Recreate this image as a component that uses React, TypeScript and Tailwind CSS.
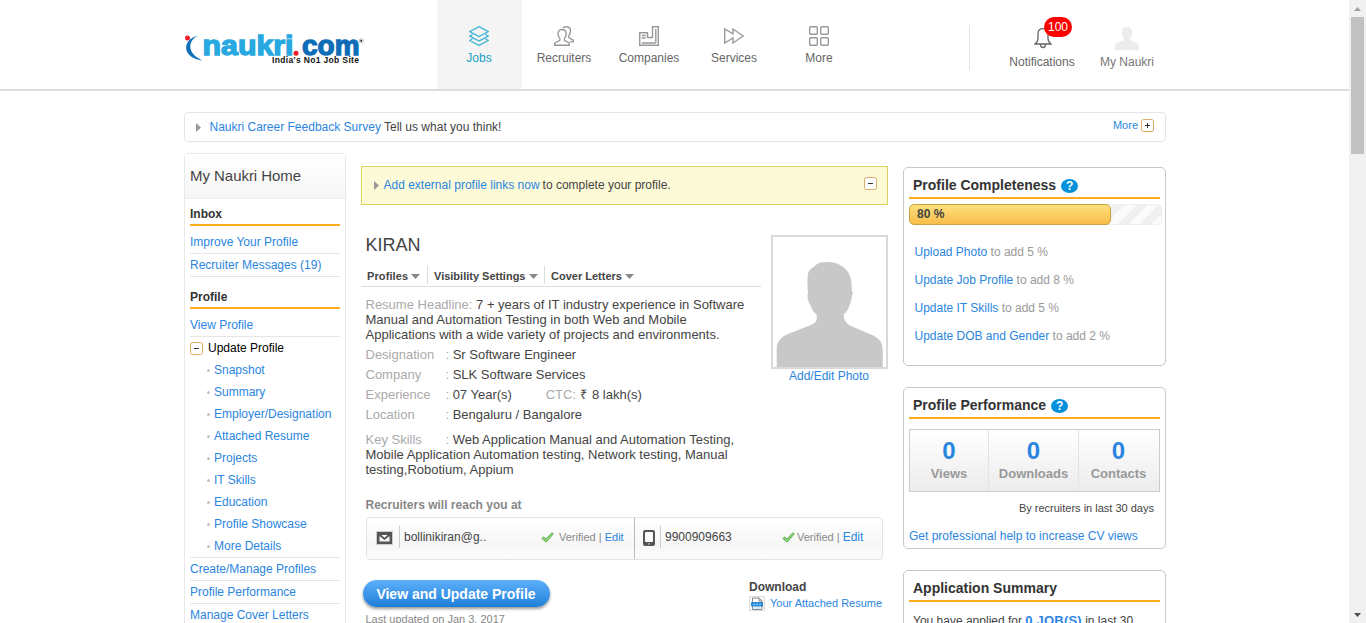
import React from "react";

const Logo = () => (
  <svg width="182" height="34" viewBox="0 0 182 34" className="block">
    <circle cx="3.500" cy="6" r="2.500" fill="#ee1c25" />
    <path d="M14.500 3.500C8.500 6 5.500 11 6.500 16.500C7.500 21.500 12 25.500 18.500 28.500C10 27.500 4.500 24 2.500 18.500C.8 12 5 5.500 14.500 3.500Z" fill="#1170b8" />
    <text x="18.500" y="23" fontFamily="Liberation Sans, sans-serif" fontWeight="700" fontSize="27" fill="#27a8e0" stroke="#27a8e0" strokeWidth="1.300" textLength="91" lengthAdjust="spacingAndGlyphs">naukri</text>
    <circle cx="112" cy="21.300" r="2.500" fill="#ee1c25" />
    <text x="118" y="23" fontFamily="Liberation Sans, sans-serif" fontWeight="700" fontSize="27" fill="#0f6db7" stroke="#0f6db7" strokeWidth="1.300" textLength="57.500" lengthAdjust="spacingAndGlyphs">com</text>
    <text x="88" y="31" fontFamily="Liberation Sans, sans-serif" fontWeight="700" fontSize="8.500" fill="#111" textLength="87" lengthAdjust="spacing">India's No1 Job Site</text>
    <circle cx="177.200" cy="8.800" r="2" fill="none" stroke="#999" strokeWidth=".7" />
    <circle cx="177.200" cy="8.800" r="1" fill="#222" />
  </svg>
);

const navIcons: Record<string, React.ReactNode> = {
  Jobs: <g stroke="#3fb3d3" strokeWidth="1.300"><path d="M10 .7 19.300 5.600 10 10.500 .7 5.600Z" /><path d="M3.500 8.500.7 10.200 10 15l9.300-4.800-2.800-1.700M3.500 12.800.7 14.500 10 19.400l9.300-4.900-2.800-1.700" /></g>,
  Recruiters: <g stroke="#999" strokeWidth="1.400"><path d="M.7 19.300v-2c1-1.700 4.500-1.800 5.300-3.300.5-1.500-2-3-2-6 0-3 1.500-4.500 4-4.500s4.200 1.500 4.200 4.500-2.400 4.500-1.900 6c.8 1.500 4.200 1.600 5 3.300v2Z" /><path d="M8.800 1.800C9.700 1 11 .7 12.300.7c2.700 0 4.200 1.500 4.200 4.300 0 3.200-2.500 4.500-1.900 6.200.7 1.500 4 1.700 4.700 3.200v1.500h-3.600" /></g>,
  Companies: <g stroke="#999" strokeWidth="1.400"><path d="M.7 6.700h7.800v4.800h5V.7h5.800v18.600H.7Z" /><path d="M2.700 9.500h4M2.700 12h4M2.700 17h14M16.800 3v14" /></g>,
  Services: <path d="M.7 3v14l8.300-5v5l10.300-7L9 3v4.800Z" stroke="#999" strokeWidth="1.400" />,
  More: <g stroke="#999" strokeWidth="1.400"><rect x=".7" y=".7" width="7.600" height="7.600" rx="1" /><rect x="11.700" y=".7" width="7.600" height="7.600" rx="1" /><rect x=".7" y="11.700" width="7.600" height="7.600" rx="1" /><rect x="11.700" y="11.700" width="7.600" height="7.600" rx="1" /></g>,
};

const Header = () => (
  <header className="flex h-[91px] border-b-2 border-[#ddd] pl-[184px]">
    <div className="w-[253px] pt-[32px]"><Logo /></div>
    <nav className="flex w-[532px]">
      {Object.keys(navIcons).map((n) => (
        <a key={n} className={`flex w-[85px] flex-col items-center pr-px pt-[26px] text-[12px] leading-[16px] ${n === "Jobs" ? "bg-[#f4f4f4] text-[#1a9fc5]" : "text-[#666]"}`}>
          <svg width="20" height="20" viewBox="0 0 20 20" fill="none" className="mb-[4px]">{navIcons[n]}</svg>
          {n}
        </a>
      ))}
    </nav>
    <div className="mt-[25px] h-[45px] w-px bg-[#e3e3e3]" />
    <a className="relative ml-[34px] flex w-[76px] flex-col items-center pt-[28px] text-[12px] leading-[16px] text-[#666]">
      <svg width="18" height="21" viewBox="0 0 18 21" fill="none" stroke="#666" strokeWidth="1.300" className="mb-[5px] ml-[2px]"><path d="M9 .7C5.500.7 4 3 4 6v4.500c0 2.500-1 4-3 5.500h16c-2-1.500-3-3-3-5.500V6c0-3-1.500-5.300-5-5.300ZM6.500 16.500c0 4 5 4 5 0" /></svg>
      Notifications
      <span className="absolute left-[40px] top-[17px] flex h-[20px] w-[28px] items-center justify-center rounded-full bg-[#f00] text-[12px] text-white">100</span>
    </a>
    <a className="ml-[8px] flex w-[78px] flex-col items-center pt-[27px] text-[12px] leading-[16px] text-[#777]">
      <svg width="24" height="23" viewBox="0 0 24 23" fill="#ececec" className="mb-[4px]"><path d="M12 0C8.500 0 6.500 2 6.800 6c0 3.500 1.800 4.500 2.200 6.500 0 2-8 2.300-9 6V23h24v-4.500c-1-3.700-9-4-9-6 .4-2 2.200-3 2.200-6.500C17.500 2 15.500 0 12 0Z" /></svg>
      My Naukri
    </a>
  </header>
);

const Toggle = ({ plus = false }: { plus?: boolean }) => (
  <svg width="13" height="13" viewBox="0 0 13 13" className="shrink-0"><rect x=".5" y=".5" width="12" height="12" rx="2" fill="#fff" stroke="#dcab68" /><path d={plus ? "M4 6.500h5M6.500 4v5" : "M4 6.500h5"} stroke="#333" /></svg>
);
const Caret = () => <svg width="5" height="9" viewBox="0 0 5 9" className="shrink-0"><path d="M0 0 5 4.500 0 9Z" fill="#999" /></svg>;
const Down = () => <svg width="9" height="5" viewBox="0 0 9 5" className="mb-[2px] ml-[3px] inline-block"><path d="M0 0h9L4.500 5Z" fill="#888" /></svg>;

const SideTitle = ({ children }: { children: React.ReactNode }) => (
  <h3 className="border-b-2 border-[#ffab1f] pb-[2px] text-[12px] font-bold leading-[16px] text-[#333]">{children}</h3>
);
const SideLink = ({ children }: { children: React.ReactNode }) => (
  <a className="block h-[23px] whitespace-nowrap border-b border-[#e6e6e6] text-[12px] leading-[22px]">{children}</a>
);

const Sidebar = () => (
  <aside className="h-[600px] w-[162px] rounded-t-[4px] border border-[#e9e9e9] text-[#2a85e0]">
    <div className="h-[45px] border-b border-[#e9e9e9] bg-linear-to-b from-white to-[#f5f5f5] pl-[5px] text-[15px] leading-[44px] text-[#444]"><span className="tracking-[-0.04px]">My Naukri Home</span></div>
    <div className="pl-[5px] pr-[5px] pt-[7px]">
      <div className="h-[25px]"><SideTitle>Inbox</SideTitle></div>
      <SideLink>Improve Your Profile</SideLink><SideLink>Recruiter Messages (19)</SideLink>
      <div className="h-[37px] pt-[12px]"><SideTitle>Profile</SideTitle></div>
      <SideLink>View Profile</SideLink>
      <div className="flex h-[22px] items-center gap-[5px] text-[12px] text-black"><Toggle />Update Profile</div>
      <ul>
        {["Snapshot", "Summary", "Employer/Designation", "Attached Resume", "Projects", "IT Skills", "Education", "Profile Showcase", "More Details"].map((s) => (
          <li key={s} className="flex h-[22px] items-center whitespace-nowrap pl-[17px] text-[12px]"><i className="mr-[4px] size-[3px] rounded-full bg-[#c4c4c4]" />{s}</li>
        ))}
      </ul>
      <div className="border-t border-[#e6e6e6]">
        <SideLink>Create/Manage Profiles</SideLink><SideLink>Profile Performance</SideLink><SideLink>Manage Cover Letters</SideLink>
      </div>
    </div>
  </aside>
);

const Row = ({ label, children }: { label: string; children: React.ReactNode }) => (
  <div className="flex h-[20px] items-center"><span className="w-[80px] text-[#aaa]">{label}</span><span className="mr-[3.500px] text-[#aaa]">:</span>{children}</div>
);
const Tick = () => (
  <svg width="13" height="11" viewBox="0 0 13 11" className="shrink-0"><path d="M.8 6.500 2.800 4.800 5 7 10.800.8 12.400 1.800 5.200 10.200Z" fill="#8cce74" stroke="#55a84c" strokeWidth=".8" /></svg>
);

const Main = () => (
  <main className="ml-[15px] w-[527px] pt-[13px] text-[13px] leading-[15px] text-[#444]">
    <div className="flex h-[39px] items-start border border-[#dcd35f] bg-[#fdfad8] pl-[12px] pr-[10px]">
      <div className="flex h-[36px] items-center text-[12px]"><Caret /><span className="ml-[4.500px] text-[#2a85e0]">Add external profile links now</span><span className="ml-[3px]"> to complete your profile.</span></div>
      <div className="ml-auto pt-[10px]"><Toggle /></div>
    </div>
    <div className="flex">
      <div className="w-[400px]">
        <h1 className="pl-[4.500px] pt-[30px] text-[18px] leading-[20px]">KIRAN</h1>
        <div className="mt-[11px] flex h-[21px] border-b border-[#ddd] text-[11px] font-bold leading-[20px]">
          <span className="h-[18px] w-[67px] whitespace-nowrap border-r border-[#ddd] pl-[6px] tracking-[0.1px]">Profiles<Down /></span>
          <span className="h-[18px] w-[117px] whitespace-nowrap border-r border-[#ddd] pl-[6px]">Visibility Settings<Down /></span>
          <span className="whitespace-nowrap pl-[6px]">Cover Letters<Down /></span>
        </div>
        <div className="whitespace-nowrap pl-[4.500px] pt-[10px]">
          <p><span className="text-[#aaa]">Resume Headline:</span> 7 + years of IT industry experience in Software<br />Manual and Automation Testing in both Web and Mobile<br />Applications with a wide variety of projects and environments.</p>
          <div className="pt-[2px]">
            <Row label="Designation">Sr Software Engineer</Row>
            <Row label="Company">SLK Software Services</Row>
            <Row label="Experience"><span className="w-[93px]">07 Year(s)</span><span className="mr-[4px] text-[#aaa]">CTC:</span>₹ <span className="ml-[5px]">8 lakh(s)</span></Row>
            <Row label="Location">Bengaluru / Bangalore</Row>
          </div>
          <p className="pt-[8px]"><span className="inline-block w-[80px] text-[#aaa]">Key Skills</span><span className="mr-[3.500px] text-[#aaa]">:</span>Web Application Manual and Automation Testing,<br />Mobile Application Automation testing, Network testing, Manual<br />testing,Robotium, Appium</p>
        </div>
      </div>
      <div className="ml-[10px] mt-[30px] flex w-[117px] flex-col items-center text-[12px] text-[#2a85e0]">
        <div className="h-[134px] w-[117px] border-2 border-[#d9d9d9]">
          <svg width="113" height="130" viewBox="0 0 113 130" fill="#c8c8c8"><path d="M3.700 130v-18c0-7 3.500-11 10-14.500L38 88c4-2 5.500-3.500 5.700-6V77.500c-3-2.500-4.500-4.500-6-9-3-4-4-8.500-2.700-13-.5-7-1.200-14 .3-20C37 32 39 30.500 41 30c2-3 6-5 10.500-4.800 7-.5 12 .5 16.500 3.500 8 4 11.500 13 10.700 24.500 1.500 2 1.500 4 .3 5-.3 4-1 7-2.500 9.800-1.500 5-3 7-5.500 9v4.500c1.500 3 3 6 7 7.500l22.300 9.500c6 3 9.400 7 9.400 14v17.500Z" /></svg>
        </div>
        <a className="mr-px">Add/Edit Photo</a>
      </div>
    </div>
    <h4 className="pl-[4.500px] pt-[21px] text-[12px] font-bold text-[#888]">Recruiters will reach you at</h4>
    <div className="ml-[5px] mt-[4px] flex h-[43px] w-[517px] rounded-[4px] border border-[#e3e3e3] bg-linear-to-b from-white via-[#f6f6f6] via-65% to-[#fcfcfc] text-[12px] text-[#888]">
      <div className="flex w-[268px] items-center border-r border-[#bbb] pb-[3px] pl-[9px]">
        <svg width="17" height="14" viewBox="0 0 17 14" className="mt-px"><rect x=".5" y=".5" width="16" height="13" fill="#555" stroke="#ccc" /><path d="M3.500 5v5.500h10V5L8.500 9Z" fill="#f5f5f5" /><path d="M5.500 4h6l-3 2.800Z" fill="#fff" /></svg>
        <span className="ml-[6px] h-[22px] w-px bg-[#ccc]" /><span className="ml-[4px] w-[137px] text-[#444]">bollinikiran@g..</span>
        <Tick /><span className="ml-[5px] text-[11px]">Verified | <a className="text-[#2a85e0]">Edit</a></span>
      </div>
      <div className="flex items-center pb-[3px] pl-[8px]">
        <svg width="12" height="16" viewBox="0 0 12 16" className="mt-[2px]"><rect width="12" height="16" rx="2" fill="#555" /><rect x="2" y="2" width="8" height="10" rx="1" fill="#fafafa" /><rect x="5" y="13.300" width="2" height="1.200" fill="#bbb" /></svg>
        <span className="ml-[5px] h-[22px] w-px bg-[#ccc]" /><span className="ml-[4px] w-[117px] text-[#444]">9900909663</span>
        <Tick /><span className="ml-[2px] whitespace-nowrap text-[11px]">Verified | <a className="text-[12px] text-[#2a85e0]">Edit</a></span>
      </div>
    </div>
    <div className="flex pl-[2px] pt-[20px]">
      <div className="w-[386px]">
        <button className="block h-[27px] w-[187px] rounded-full bg-linear-to-b from-[#5cb0fb] to-[#1c7fd8] pr-px text-[14px] font-bold leading-[26px] text-white shadow-[0_2px_3px_#999]">View and Update Profile</button>
        <p className="pl-[2.500px] pt-[6px] text-[11px] leading-[13px] text-[#888]">Last updated on Jan 3, 2017</p>
      </div>
      <div>
        <h4 className="text-[12px] font-bold leading-[14px]">Download</h4>
        <div className="flex items-center pt-[2px] text-[11px] text-[#2a85e0]">
          <svg width="16" height="15" viewBox="0 0 16 15"><rect x=".5" y=".5" width="15" height="14" fill="#f7f7f7" stroke="#ddd" /><path d="M3.500 13.500V2h6.500l3 3v8.500Z" fill="#fff" stroke="#888" /><path d="M10 2v3h3" fill="none" stroke="#888" /><rect x="2" y="6" width="12" height="4.500" rx="1" fill="#2687d5" /><path d="M4 8.300h2M7 8.300h2M10 8.300h2M5 12h6" stroke="#9fd2f5" /></svg>
          <a className="ml-[5px] whitespace-nowrap">Your Attached Resume</a>
        </div>
      </div>
    </div>
  </main>
);

const Card = ({ title, help, className, children }: { title: string; help?: boolean; className: string; children: React.ReactNode }) => (
  <section className={`rounded-[5px] border border-[#c8c8c8] pl-[5px] ${className}`}>
    <h2 className="flex h-[31px] w-[251px] items-center border-b-2 border-[#ffab1f] pl-[4px] pt-[5px] text-[14px] font-bold text-[#333]">
      {title}
      {help && <span className="ml-[5px] mt-px flex h-[14px] w-[17px] items-center justify-center rounded-[50%] bg-[#0590dc] text-[12px] leading-none text-white">?</span>}
    </h2>
    {children}
  </section>
);

const tasks = [["Upload Photo", "5"], ["Update Job Profile", "8"], ["Update IT Skills", "5"], ["Update DOB and Gender", "2"]];

const Right = () => (
  <div className="ml-[15px] w-[263px] pt-[14px] text-[12px] text-[#444]">
    <Card title="Profile Completeness" help className="h-[199px]">
      <div className="mt-[5px] h-[21px] w-[253px] rounded-[5px] border border-[#eee] bg-[repeating-linear-gradient(135deg,#f0f0f0_0_8px,#fbfbfb_8px_16px)]">
        <div className="-ml-px -mt-px h-[21px] w-[202px] rounded-[5px] border border-[#c9a145] bg-linear-to-b from-[#fde07b] to-[#f9bd49] pl-[7px] font-bold leading-[18px]">80 %</div>
      </div>
      <ul className="pl-[5.500px] pt-[13px]">
        {tasks.map(([t, n]) => <li key={t} className="h-[28px] leading-[28px] text-[#999]"><a className="text-[#2a85e0]">{t}</a> to add {n} %</li>)}
      </ul>
    </Card>
    <Card title="Profile Performance" help className="mt-[21px] h-[162px]">
      <div className="mt-[10px] flex h-[63px] w-[251px] border border-[#ccc] bg-linear-to-b from-white to-[#ececec] text-center text-[13px] font-bold text-[#999]">
        {[["Views", "w-[78px]"], ["Downloads", "w-[90px] border-l border-[#e3e3e3]"], ["Contacts", "w-[80px] border-l border-[#e3e3e3]"]].map(([l, c]) => (
          <div key={l} className={`pt-[9px] ${c}`}><div className="text-[24px] leading-[24px] text-[#2a85e0]">0</div><div className="leading-[21px]">{l}</div></div>
        ))}
      </div>
      <p className="pr-[11px] pt-[9px] text-right text-[11px] leading-[14px]">By recruiters in last 30 days</p>
      <a className="block pt-[13px] leading-[16px] text-[#2a85e0]">Get professional help to increase CV views</a>
    </Card>
    <Card title="Application Summary" className="mt-[21px] h-[100px]">
      <p className="whitespace-nowrap pl-[4px] pt-[10px] leading-[18px]">You have applied for <b className="text-[13px] tracking-[0.2px] text-[#2a85e0]">0 JOB(S)</b> in last 30</p>
    </Card>
  </div>
);

export default function App() {
  return (
    <div className="flex h-[623px] w-[1366px] overflow-hidden bg-white font-['Liberation_Sans',Arial,sans-serif]">
      <div className="h-[623px] w-[1349px] overflow-hidden">
        <Header />
        <div className="ml-[184px] mt-[21px] flex h-[30px] w-[982px] items-center rounded-[4px] border border-[#e5e5e5] pl-[11px] pr-[11px] text-[12px] text-[#444]">
          <Caret /><span className="ml-[8.500px] whitespace-pre"><a className="text-[#2a85e0]">Naukri Career Feedback Survey</a> Tell us what you think!</span>
          <span className="mb-[3px] ml-auto flex items-center gap-[3px] text-[11px] text-[#2a85e0]">More<Toggle plus /></span>
        </div>
        <div className="ml-[184px] mt-[11px] flex w-[982px] items-start"><Sidebar /><Main /><Right /></div>
      </div>
      <div className="flex w-[17px] flex-col items-center justify-between bg-[#f1f1f1]">
        <div>
          <svg width="13" height="17" viewBox="0 0 13 17"><path d="M3 11 6.500 7l3.500 4Z" fill="#a0a0a0" /></svg>
          <div className="h-[137px] w-[13px] bg-[#c1c1c1]" />
        </div>
        <svg width="13" height="17" viewBox="0 0 13 17"><path d="M3 7l3.500 4L10 7Z" fill="#505050" /></svg>
      </div>
    </div>
  );
}
